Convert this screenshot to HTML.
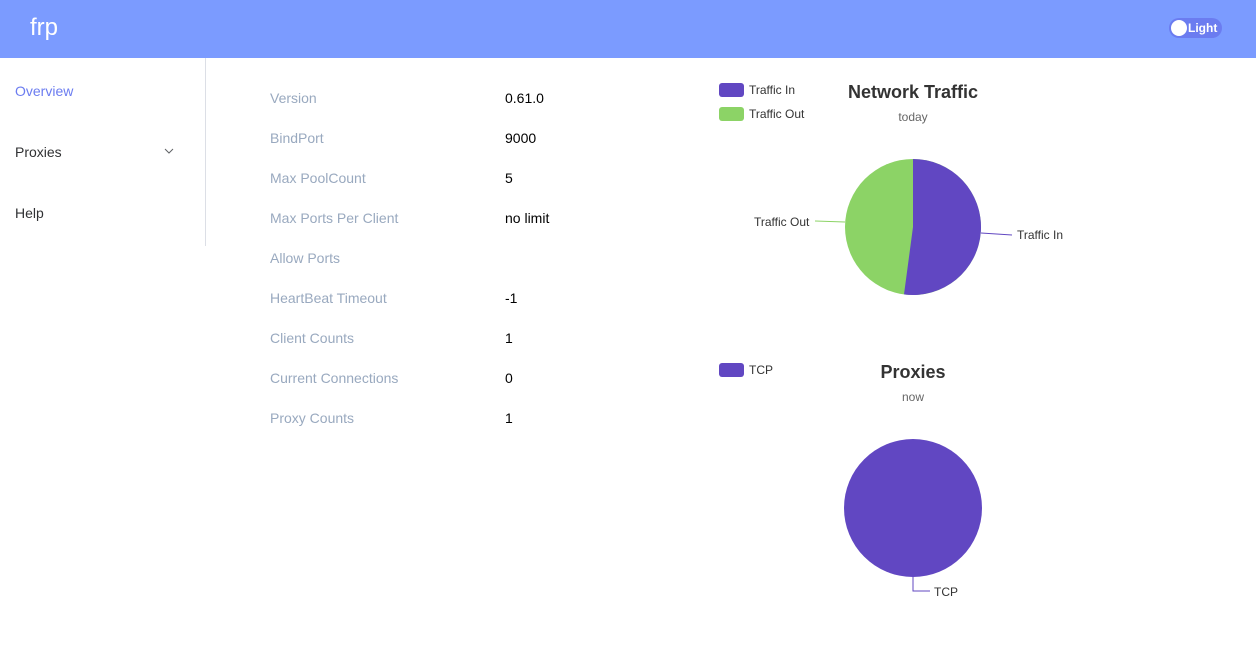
<!DOCTYPE html>
<html><head><meta charset="utf-8"><style>
*{margin:0;padding:0;box-sizing:border-box}
body{width:1256px;height:661px;background:#fff;font-family:"Liberation Sans",Arial,sans-serif;position:relative;overflow:hidden}
.hdr{position:absolute;left:0;top:0;width:1256px;height:58px;background:#7b9bff}
.logo{position:absolute;left:30px;top:14px;color:#fff;font-size:24px}
.tog{position:absolute;left:1169px;top:18px;width:53px;height:20px;border-radius:10px;background:#6b7cf0}
.tog .k{position:absolute;left:2px;top:2px;width:16px;height:16px;border-radius:50%;background:#fff}
.tog span{position:absolute;left:19px;top:3px;color:#fff;font-size:12px;font-weight:bold}
.side{position:absolute;left:205px;top:58px;width:1px;height:188px;background:#dcdfe6}
.nav{position:absolute;left:15px;font-size:14px;color:#303133}
.lbl{position:absolute;left:270px;font-size:14px;color:#99a9bf}
.val{position:absolute;left:505px;font-size:14px;color:#000}
svg{position:absolute;left:0;top:0}
</style></head><body>
<div class="hdr"><div class="logo">frp</div><div class="tog"><div class="k"></div><span>Light</span></div></div>
<div class="side"></div>
<div class="nav" style="top:83px;color:#6b7cf0">Overview</div>
<div class="nav" style="top:144px">Proxies</div>
<div class="nav" style="top:205px">Help</div>
<svg width="1256" height="661">
<path d="M165 149 l4 4 l4 -4" fill="none" stroke="#606266" stroke-width="1"/>
<rect x="719" y="83" width="25" height="14" rx="3" fill="#6147c2"/>
<rect x="719" y="107" width="25" height="14" rx="3" fill="#8cd366"/>
<rect x="719" y="363" width="25" height="14" rx="3" fill="#6147c2"/>
<g font-family="Liberation Sans,Arial,sans-serif" font-size="12" fill="#333">
<text x="749" y="94">Traffic In</text>
<text x="749" y="118">Traffic Out</text>
<text x="749" y="374">TCP</text>
<text x="754" y="226">Traffic Out</text>
<text x="1017" y="239">Traffic In</text>
<text x="934" y="596">TCP</text>
</g>
<text x="913" y="98" text-anchor="middle" font-family="Liberation Sans,Arial,sans-serif" font-size="18" font-weight="bold" fill="#333">Network Traffic</text>
<text x="913" y="121" text-anchor="middle" font-family="Liberation Sans,Arial,sans-serif" font-size="12" fill="#666">today</text>
<text x="913" y="378" text-anchor="middle" font-family="Liberation Sans,Arial,sans-serif" font-size="18" font-weight="bold" fill="#333">Proxies</text>
<text x="913" y="401" text-anchor="middle" font-family="Liberation Sans,Arial,sans-serif" font-size="12" fill="#666">now</text>
<circle cx="913" cy="227" r="68" fill="#8cd366"/>
<path d="M913 227 L913 159 A68 68 0 1 1 904 294.4 Z" fill="#6147c2"/>
<path d="M981 233 L1012 235" stroke="#6147c2" fill="none"/>
<path d="M845 222 L815 221" stroke="#8cd366" fill="none"/>
<circle cx="913" cy="508" r="69" fill="#6147c2"/>
<path d="M913 577 L913 591 L930 591" stroke="#6147c2" fill="none"/>
</svg>
<div class="lbl" style="top:90px">Version</div><div class="val" style="top:90px">0.61.0</div>
<div class="lbl" style="top:130px">BindPort</div><div class="val" style="top:130px">9000</div>
<div class="lbl" style="top:170px">Max PoolCount</div><div class="val" style="top:170px">5</div>
<div class="lbl" style="top:210px">Max Ports Per Client</div><div class="val" style="top:210px">no limit</div>
<div class="lbl" style="top:250px">Allow Ports</div>
<div class="lbl" style="top:290px">HeartBeat Timeout</div><div class="val" style="top:290px">-1</div>
<div class="lbl" style="top:330px">Client Counts</div><div class="val" style="top:330px">1</div>
<div class="lbl" style="top:370px">Current Connections</div><div class="val" style="top:370px">0</div>
<div class="lbl" style="top:410px">Proxy Counts</div><div class="val" style="top:410px">1</div>
</body></html>
